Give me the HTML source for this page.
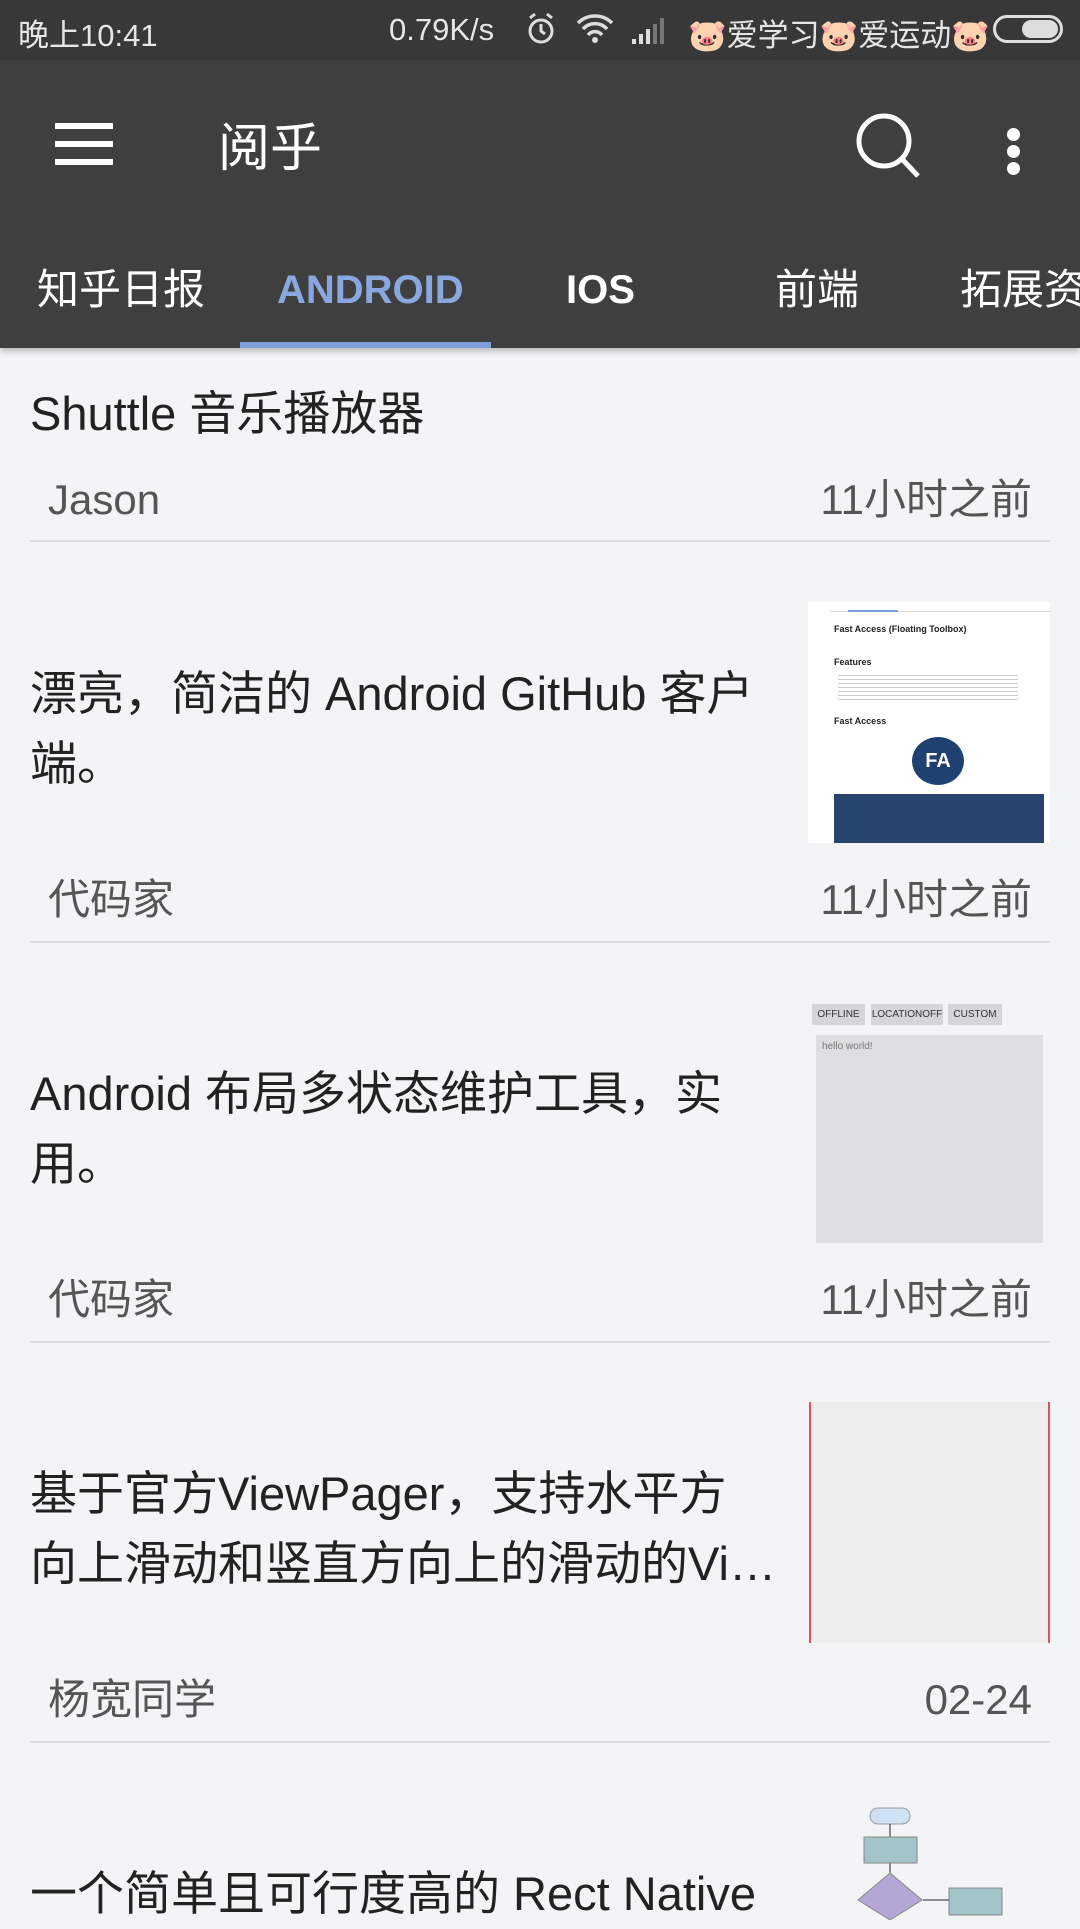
<!DOCTYPE html>
<html><head><meta charset="utf-8"><style>
*{margin:0;padding:0;box-sizing:border-box}
body{width:1080px;height:1920px;overflow:hidden;background:#f3f4f6;font-family:"Liberation Sans","Noto Sans CJK SC",sans-serif;position:relative}
.a{position:absolute;white-space:nowrap}
.sb{position:absolute;left:0;top:0;width:1080px;height:60px;background:#383838;color:#e6e6e6;font-size:31px}
.tb{position:absolute;left:0;top:60px;width:1080px;height:288px;background:#3f3f3f;box-shadow:0 3px 6px rgba(0,0,0,.25)}
.tab{position:absolute;top:262px;font-size:42px;color:#fff;line-height:56px;white-space:nowrap}
.t{position:absolute;left:30px;font-size:47px;color:#222;line-height:70px;width:760px;white-space:nowrap}
.m{position:absolute;font-size:42px;color:#555;line-height:50px}
.d{position:absolute;left:30px;width:1020px;height:2px;background:#dcdcde}
</style></head><body>
<div class="sb">
<span class="a" style="left:18px;top:10px">晚上10:41</span>
<span class="a" style="left:389px;top:12px">0.79K/s</span>
<svg class="a" style="left:525px;top:12px" width="32" height="34" viewBox="0 0 32 34"><circle cx="16" cy="19" r="11" fill="none" stroke="#ddd" stroke-width="3"/><path d="M16 12v7l4 3M5 6l5-4M27 6l-5-4" stroke="#ddd" stroke-width="3" fill="none"/></svg>
<svg class="a" style="left:575px;top:12px" width="40" height="32" viewBox="0 0 40 32"><path d="M3 11a24 24 0 0 1 34 0M8 17a16 16 0 0 1 24 0M13 23a9 9 0 0 1 14 0" stroke="#ddd" stroke-width="3.5" fill="none"/><circle cx="20" cy="28" r="3" fill="#ddd"/></svg>
<svg class="a" style="left:630px;top:16px" width="38" height="28" viewBox="0 0 38 28"><path d="M2 28h4v-5h-4zM9 28h4v-10h-4zM16 28h4v-15h-4z" fill="#ddd"/><path d="M23 28h4v-20h-4zM30 28h4v-26h-4z" fill="#777"/></svg>
<span class="a" style="left:688px;top:10px;color:#e6e6e6">🐷爱学习🐷爱运动🐷</span>
<div class="a" style="left:993px;top:15px;width:70px;height:28px;border:3px solid #ddd;border-radius:14px"><div style="position:absolute;right:2px;top:2px;width:36px;height:18px;background:#ddd;border-radius:9px"></div></div>
</div>
<div class="tb">
<div class="a" style="left:55px;top:63px;width:58px;height:6px;background:#fff"></div>
<div class="a" style="left:55px;top:81px;width:58px;height:6px;background:#fff"></div>
<div class="a" style="left:55px;top:99px;width:58px;height:6px;background:#fff"></div>
<span class="a" style="left:218px;top:46px;font-size:52px;color:#fff">阅乎</span>
<svg class="a" style="left:855px;top:52px" width="70" height="70" viewBox="0 0 70 70"><circle cx="29" cy="29" r="25" fill="none" stroke="#fff" stroke-width="5"/><path d="M47 47l16 17" stroke="#fff" stroke-width="5"/></svg>
<div class="a" style="left:1007px;top:68px;width:13px;height:13px;border-radius:7px;background:#fff"></div>
<div class="a" style="left:1007px;top:85px;width:13px;height:13px;border-radius:7px;background:#fff"></div>
<div class="a" style="left:1007px;top:102px;width:13px;height:13px;border-radius:7px;background:#fff"></div>
</div>
<span class="tab" style="left:37px">知乎日报</span>
<span class="tab" style="left:277px;color:#8aa8e0;font-weight:bold;font-size:40px">ANDROID</span>
<span class="tab" style="left:566px;font-weight:bold;font-size:40px">IOS</span>
<span class="tab" style="left:775px">前端</span>
<span class="tab" style="left:960px">拓展资源</span>
<div class="a" style="left:240px;top:342px;width:251px;height:6px;background:#7e9fdc"></div>

<div class="t" style="top:379px">Shuttle 音乐播放器</div>
<div class="m" style="left:48px;top:475px">Jason</div>
<div class="m" style="right:48px;top:475px">11小时之前</div>
<div class="d" style="top:540px"></div>

<div class="a" style="left:808px;top:602px;width:242px;height:241px;background:#fff;overflow:hidden">
<div class="a" style="left:22px;top:0;width:220px;height:10px;border-bottom:1px solid #ddd"></div>
<div class="a" style="left:40px;top:8px;width:50px;height:2px;background:#7e9fdc"></div>
<div class="a" style="left:26px;top:22px;font-size:9px;color:#222;font-weight:bold">Fast Access (Floating Toolbox)</div>
<div class="a" style="left:26px;top:55px;font-size:9px;color:#222;font-weight:bold">Features</div>
<div class="a" style="left:30px;top:70px;width:180px;height:30px;background:repeating-linear-gradient(#fff 0 3px,#ccc 3px 4px)"></div>
<div class="a" style="left:26px;top:114px;font-size:9px;color:#222;font-weight:bold">Fast Access</div>
<div class="a" style="left:104px;top:135px;width:52px;height:48px;border-radius:50%;background:#1f4170;color:#fff;font-size:20px;font-weight:bold;text-align:center;line-height:48px">FA</div>
<div class="a" style="left:26px;top:192px;width:210px;height:49px;background:#26446e"></div>
</div>
<div class="t" style="top:659px">漂亮，简洁的 Android GitHub 客户<br>端。</div>
<div class="m" style="left:48px;top:875px">代码家</div>
<div class="m" style="right:48px;top:875px">11小时之前</div>
<div class="d" style="top:941px"></div>

<div class="a" style="left:808px;top:1002px;width:242px;height:241px;background:#f4f3f6">
<div class="a" style="left:4px;top:2px;width:53px;height:21px;background:#d6d5d9;font-size:10px;color:#333;text-align:center;line-height:21px">OFFLINE</div>
<div class="a" style="left:63px;top:2px;width:72px;height:21px;background:#d6d5d9;font-size:10px;color:#333;text-align:center;line-height:21px">LOCATIONOFF</div>
<div class="a" style="left:140px;top:2px;width:54px;height:21px;background:#d6d5d9;font-size:10px;color:#333;text-align:center;line-height:21px">CUSTOM</div>
<div class="a" style="left:8px;top:33px;width:227px;height:208px;background:#dedde0;font-size:10px;color:#777;padding:6px">hello world!</div>
</div>
<div class="t" style="top:1059px">Android 布局多状态维护工具，实<br>用。</div>
<div class="m" style="left:48px;top:1275px">代码家</div>
<div class="m" style="right:48px;top:1275px">11小时之前</div>
<div class="d" style="top:1341px"></div>

<div class="a" style="left:809px;top:1402px;width:241px;height:241px;background:#eeeeee;border-left:2px solid #e05060;border-right:2px solid #e05060"></div>
<div class="t" style="top:1459px">基于官方ViewPager，支持水平方<br>向上滑动和竖直方向上的滑动的Vi…</div>
<div class="m" style="left:48px;top:1675px">杨宽同学</div>
<div class="m" style="right:48px;top:1675px">02-24</div>
<div class="d" style="top:1741px"></div>

<svg class="a" style="left:850px;top:1800px" width="160" height="120" viewBox="0 0 160 120">
<rect x="20" y="8" width="40" height="16" rx="8" fill="#cfe2f3" stroke="#999"/>
<path d="M40 24v13M40 63v10M73 100h26" stroke="#222"/>
<rect x="14" y="37" width="53" height="26" fill="#a2c4c9" stroke="#888"/>
<polygon points="40,73 72,100 40,120 8,100" fill="#b4a7d6" stroke="#888"/>
<rect x="99" y="88" width="53" height="27" fill="#a2c4c9" stroke="#888"/>
</svg>
<div class="t" style="top:1859px">一个简单且可行度高的 Rect Native</div>
</body></html>
